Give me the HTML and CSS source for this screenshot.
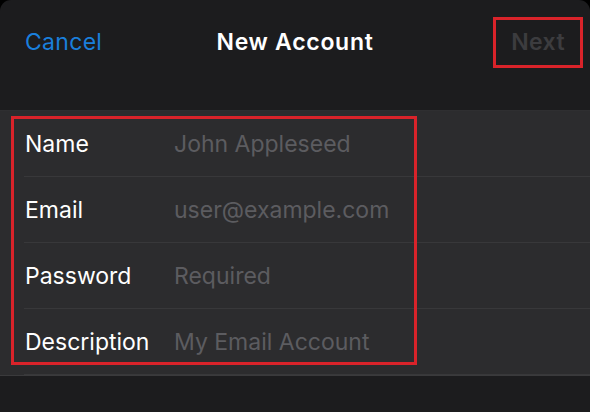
FILE: index.html
```html
<!DOCTYPE html>
<html lang="en">
<head>
    <meta charset="UTF-8">
    <meta name="viewport" content="width=device-width, initial-scale=1.0">
    <title>New Account</title>
    <link rel="stylesheet" href="styles.css">
</head>
<body>
    <div class="sheet">
        <div class="nav-bar">
            <button class="nav-cancel">Cancel</button>
            <div class="nav-title">New Account</div>
            <button class="nav-next">Next</button>
        </div>
        <div class="form-group">
            <div class="form-row">
                <label class="form-label">Name</label>
                <input class="form-input" type="text" placeholder="John Appleseed">
            </div>
            <div class="form-row">
                <label class="form-label">Email</label>
                <input class="form-input" type="text" placeholder="user@example.com">
            </div>
            <div class="form-row">
                <label class="form-label">Password</label>
                <input class="form-input" type="password" placeholder="Required">
            </div>
            <div class="form-row">
                <label class="form-label">Description</label>
                <input class="form-input" type="text" placeholder="My Email Account">
            </div>
            <div class="highlight"></div>
        </div>
    </div>
</body>
</html>
```

FILE: styles.css
```css
body {
    margin: 0;
    background-color: #000000;
    font-family: Inter, "Noto Sans", sans-serif;
    color: #ffffff;
    overflow: hidden;
}
.sheet {
    height: 412px;
    background-color: #1c1c1e;
    border-radius: 11px 11px 0 0;
    display: flex;
    flex-direction: column;
}
.nav-bar {
    height: 84px;
    margin-bottom: 26px;
    display: flex;
    align-items: center;
    justify-content: space-between;
    padding: 0 7px 0 25px;
    position: relative;
}
.nav-bar button {
    background: none;
    border: none;
    font-family: inherit;
    font-size: 23px;
    padding: 0;
    cursor: pointer;
}
.nav-cancel {
    color: #1a7fdc;
    letter-spacing: 0.3px;
}
.nav-title {
    position: absolute;
    left: 0;
    right: 0;
    text-align: center;
    font-size: 23px;
    font-weight: 600;
    letter-spacing: 0.7px;
    pointer-events: none;
}
.nav-next {
    color: #3c3c3f;
    font-weight: 600 !important;
    letter-spacing: 0.4px;
    border: 3px solid #d9232a !important;
    padding: 8px 15px 9px 15px !important;
}
.form-group {
    position: relative;
    background-color: #2c2c2e;
    border-top: 1px solid #2f2f31;
    border-bottom: 1px solid #3a3a3c;
}
.form-row {
    display: flex;
    align-items: center;
    height: 65px;
    margin-left: 24px;
    padding-left: 1px;
    border-bottom: 1px solid #38383a;
}
.form-row:last-of-type {
    border-bottom: none;
}
.form-label {
    width: 149px;
    font-size: 23px;
    flex-shrink: 0;
}
.form-input {
    flex: 1;
    background: none;
    border: none;
    outline: none;
    font-family: inherit;
    font-size: 23px;
    color: #ffffff;
    padding: 0;
}
.form-input::placeholder {
    color: #5c5c60;
}
.highlight {
    position: absolute;
    top: 5px;
    left: 11px;
    width: 400px;
    height: 243px;
    border: 3px solid #d9232a;
    pointer-events: none;
}
```
